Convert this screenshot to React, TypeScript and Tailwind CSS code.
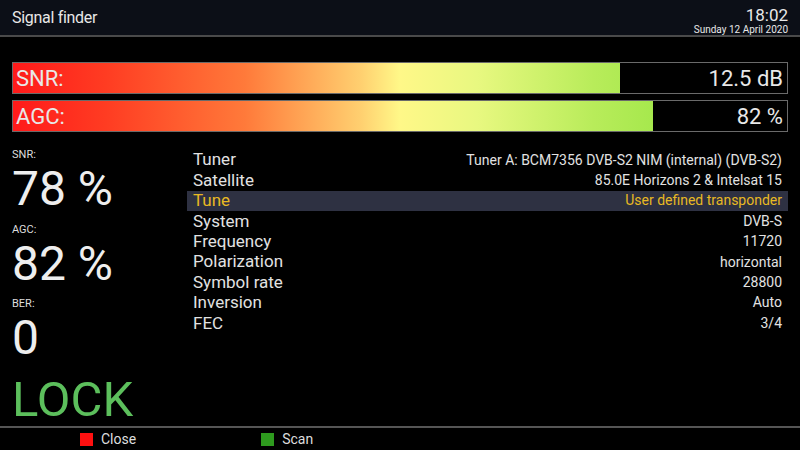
import React from "react";

const rows: [string, string][] = [
  ["Tuner", "Tuner A: BCM7356 DVB-S2 NIM (internal) (DVB-S2)"],
  ["Satellite", "85.0E Horizons 2 & Intelsat 15"],
  ["Tune", "User defined transponder"],
  ["System", "DVB-S"],
  ["Frequency", "11720"],
  ["Polarization", "horizontal"],
  ["Symbol rate", "28800"],
  ["Inversion", "Auto"],
  ["FEC", "3/4"],
];

function Bar({ label, value, pct }: { label: string; value: string; pct: number }) {
  return (
    <div className="relative h-[32px] border border-[#6a6a6a] bg-black">
      <div className="absolute inset-y-0 left-0 overflow-hidden" style={{ width: pct + "%" }}>
        <div className="h-full w-[774px] bg-[linear-gradient(to_right,#ff1a1a_0%,#ff3c22_12%,#ff7a3a_30%,#ffd070_45%,#fff888_50%,#e8f880_60%,#b8ec5a_75%,#7ee030_100%)]" />
      </div>
      <div className="relative flex h-full items-center justify-between px-[3px] text-[22px] text-[#e8e8e8]">
        <span>{label}</span>
        <span className="pr-[1px]">{value}</span>
      </div>
    </div>
  );
}

function Stat({ label, value }: { label: string; value: string }) {
  return (
    <div className="flex flex-col">
      <span className="text-[11px] leading-[13px] text-[#dddddd]">{label}</span>
      <span className="text-[48px] leading-[56px] text-[#eeeeee]">{value}</span>
    </div>
  );
}

export default function App() {
  return (
    <div className="flex h-[450px] w-[800px] flex-col overflow-hidden bg-black font-['Roboto',sans-serif] text-[#e6e6e6]">
      <div className="flex h-[37px] shrink-0 items-start justify-between border-b-2 border-[#4a4a4a] bg-[#0c0f17] px-[12px]">
        <span className="mt-[8px] text-[16px] leading-[20px] tracking-[-0.3px] text-[#e8e8e8]">
          Signal finder
        </span>
        <div className="flex flex-col items-end text-[#e8e8e8]">
          <span className="mt-[7px] text-[17px] leading-[17px]">18:02</span>
          <span className="text-[10px] leading-[11px]">Sunday 12 April 2020</span>
        </div>
      </div>

      <div className="mt-[25px] flex shrink-0 flex-col gap-[6px] px-[12px]">
        <Bar label="SNR:" value="12.5 dB" pct={78.4} />
        <Bar label="AGC:" value="82 %" pct={82.7} />
      </div>

      <div className="flex min-h-0 flex-1">
        <div className="flex w-[187px] flex-col pl-[12px] pt-[16px]">
          <div className="flex flex-col gap-[5.5px]">
            <Stat label="SNR:" value="78 %" />
            <Stat label="AGC:" value="82 %" />
            <Stat label="BER:" value="0" />
          </div>
          <span className="mt-[10px] text-[49px] leading-[48px] text-[#5cbf5c]">LOCK</span>
        </div>
        <div className="flex flex-1 flex-col pr-[12px] pt-[18px]">
          {rows.map(([k, v]) => {
            const sel = k === "Tune";
            return (
              <div
                key={k}
                className={
                  "flex h-[20.4px] items-center justify-between px-[6px] " +
                  (sel ? "bg-[#2e3142] text-[#e8b923]" : "text-[#e2e2e2]")
                }
              >
                <span className="text-[17px]">{k}</span>
                <span className="text-[14px]">{v}</span>
              </div>
            );
          })}
        </div>
      </div>

      <div className="flex h-[24px] shrink-0 items-center border-t-2 border-[#555555] text-[14px] text-[#dddddd]">
        <div className="ml-[80px] flex items-center gap-[8px]">
          <span className="h-[13px] w-[13px] bg-[#ff1010]" />
          <span>Close</span>
        </div>
        <div className="ml-[125px] flex items-center gap-[8px]">
          <span className="h-[13px] w-[13px] bg-[#2e9a1e]" />
          <span>Scan</span>
        </div>
      </div>
    </div>
  );
}
